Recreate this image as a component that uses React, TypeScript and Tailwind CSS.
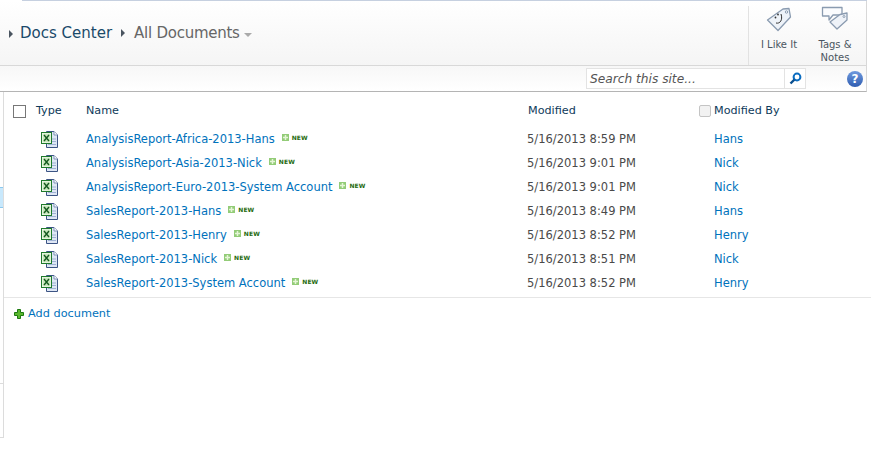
const rows = [
  { name: "AnalysisReport-Africa-2013-Hans", date: "5/16/2013 8:59 PM", by: "Hans" },
  { name: "AnalysisReport-Asia-2013-Nick", date: "5/16/2013 9:01 PM", by: "Nick" },
  { name: "AnalysisReport-Euro-2013-System Account", date: "5/16/2013 9:01 PM", by: "Nick" },
  { name: "SalesReport-2013-Hans", date: "5/16/2013 8:49 PM", by: "Hans" },
  { name: "SalesReport-2013-Henry", date: "5/16/2013 8:52 PM", by: "Henry" },
  { name: "SalesReport-2013-Nick", date: "5/16/2013 8:51 PM", by: "Nick" },
  { name: "SalesReport-2013-System Account", date: "5/16/2013 8:52 PM", by: "Henry" },
];

function ExcelIcon() {
  return (
    <svg width="18" height="17" viewBox="0 0 18 17" className="mt-[1px]">
      <path d="M5.5 .5H13L16.5 4V16.5H5.5Z" fill="#dfe7f5" stroke="#3c5484" />
      <path d="M13 .5V4H16.5" fill="#fff" stroke="#7f93b8" />
      <path d="M10 8H15M10 10.5H15M7 13.5H15" stroke="#9fb2d4" />
      <rect x=".5" y="1.5" width="10" height="11" fill="#fff" stroke="#1f7a2c" />
      <rect x="1.5" y="2.5" width="8" height="9" fill="#c9e8bd" />
      <path d="M3 4L8 10M8 4L3 10" stroke="#14591f" strokeWidth="1.4" />
    </svg>
  );
}

function NewBadge() {
  return (
    <span className="-mt-[4px] ml-[7px] flex items-center gap-[3px]">
      <svg width="7" height="7" viewBox="0 0 7 7">
        <rect width="7" height="7" fill="#93cc78" />
        <path d="M3.5 1V6M1 3.5H6" stroke="#e6f5d8" strokeWidth="1.5" />
      </svg>
      <span className="text-[6px] leading-none font-bold tracking-[0.1px] text-[#246a0e]">NEW</span>
    </span>
  );
}

export default function App() {
  return (
    <div className="flex h-[457px] w-[871px] flex-col overflow-hidden bg-white font-['DejaVu_Sans',Verdana,sans-serif] text-[11px]">
      <div className="mr-[4px] ml-[22px] h-px bg-[#c6d0e0]" />
      <div className="mr-[4px] flex h-[65px] items-stretch border-r border-b border-[#d8d8d8] bg-gradient-to-b from-white to-[#f5f5f5]">
        <div className="flex flex-1 items-center pt-[1px] pl-[9px] text-[15px] text-[#666666]">
          <span className="mr-[7px] h-0 w-0 border-y-[4px] border-l-[4px] border-y-transparent border-l-[#4a5560]" />
          <span className="text-[#1a4a6a]">Docs Center</span>
          <span className="mx-[9px] mb-[2px] h-0 w-0 border-y-[4px] border-l-[4px] border-y-transparent border-l-[#4a5560]" />
          <span className="tracking-[-0.25px]">All Documents</span>
          <span className="mt-[2px] ml-[4px] h-0 w-0 border-x-[4px] border-t-[4px] border-x-transparent border-t-[#aaaaaa]" />
        </div>
        <div className="mt-[5px] flex w-[118px] border-l border-[#e2e2e2] text-center text-[10px] leading-[13px] text-[#4a5560]">
          <div className="flex w-[60px] flex-col items-center">
            <svg width="26" height="26" viewBox="0 0 26 26" className="mt-[1px]">
              <path d="M1.5 13L17 2L23 1.5L24.5 10L12 23.5Z" fill="#eef3f9" stroke="#8a9bb0" strokeWidth="1.3" strokeLinejoin="round" />
              <circle cx="20.5" cy="5" r="1.2" fill="#fff" stroke="#8a9bb0" />
              <circle cx="12" cy="7.5" r=".9" fill="#333" />
              <circle cx="9.5" cy="10.5" r=".9" fill="#333" />
              <path d="M10 16C14 17 17 13 15 7" fill="none" stroke="#333" />
            </svg>
            <span className="mt-[5px]">I Like It</span>
          </div>
          <div className="flex w-[52px] flex-col items-center">
            <svg width="28" height="26" viewBox="0 0 28 26" className="-mt-[1px]">
              <path d="M1.5 2.5H21V10H12L8 15V11H1.5Z" fill="#fbfcfe" stroke="#8a9bb0" strokeWidth="1.3" strokeLinejoin="round" />
              <path d="M9 17L19 9.5L26 8V15L16 24Z" fill="#eef2f8" stroke="#8a9bb0" strokeWidth="1.3" strokeLinejoin="round" />
              <circle cx="23" cy="11.5" r="1" fill="#fff" stroke="#8a9bb0" />
            </svg>
            <span className="mt-[7px]">Tags &amp;<br />Notes</span>
          </div>
        </div>
      </div>
      <div className="mr-[4px] flex h-[26px] shrink-0 items-center border-r border-b border-r-[#d8d8d8] border-b-[#b4b4b4] bg-gradient-to-b from-[#f7f7f7] to-white pl-[586px]">
        <div className="flex h-[21px] w-[220px] items-stretch border border-[#e3e3e3] bg-white">
          <span className="flex-1 pt-[1px] pl-[3px] text-[12.2px] leading-[19px] text-[#555555] italic">Search this site...</span>
          <span className="flex w-[21px] items-center justify-center border-l border-[#e3e3e3]">
            <svg width="13" height="13" viewBox="0 0 13 13">
              <circle cx="8" cy="5" r="3.4" fill="none" stroke="#0a6cc0" strokeWidth="2" />
              <path d="M5.5 7.5L1.5 11.5" stroke="#0a4f90" strokeWidth="2.4" />
            </svg>
          </span>
        </div>
        <span className="ml-[41px] flex h-[16px] w-[16px] items-center justify-center rounded-full bg-gradient-to-b from-[#6f9ade] to-[#2f5cb0] text-[12px] font-bold text-white">?</span>
      </div>
      <div className="flex flex-1">
        <div className="flex h-[346px] w-[4px] flex-col border-r border-b border-[#dcdcdc]">
          <div className="h-[95px]" />
          <div className="h-[21px] border-y border-[#8cc8ee] bg-[#c8e8fc]" />
          <div className="h-[175px]" />
          <div className="h-px bg-[#dcdcdc]" />
        </div>
        <div className="flex-1">
          <div className="flex h-[35px] items-center pt-[3px] text-[11.2px] text-[#0e3a5a]">
            <span className="ml-[9px] h-[13px] w-[13px] border border-[#777777] bg-white" />
            <span className="ml-[10px] w-[50px]">Type</span>
            <span className="w-[442px]">Name</span>
            <span className="w-[171px]">Modified</span>
            <span className="mr-[3px] h-[12px] w-[12px] rounded-[2px] border border-[#c4c4c4] bg-[#f2f2f2]" />
            <span>Modified By</span>
          </div>
          <div className="border-b border-[#e6e6e6] pb-[2px] text-[11.5px]">
            {rows.map((r) => (
              <div key={r.name} className="flex h-[24px] items-center">
                <span className="ml-[37px] w-[45px]"><ExcelIcon /></span>
                <div className="flex w-[441px] items-center pt-[1px] text-[#0072bc]">
                  {r.name}
                  <NewBadge />
                </div>
                <span className="w-[187px] pt-[1px] text-[#4a4a4a]">{r.date}</span>
                <span className="pt-[1px] text-[#0072bc]">{r.by}</span>
              </div>
            ))}
          </div>
          <div className="mt-[8px] flex items-center pl-[10px] text-[11.3px] text-[#0072bc]">
            <svg width="10" height="10" viewBox="0 0 10 10" className="mr-[4px]">
              <path d="M3.5.5H6.5V3.5H9.5V6.5H6.5V9.5H3.5V6.5H.5V3.5H3.5Z" fill="#5cb82e" stroke="#1d7a10" />
            </svg>
            Add document
          </div>
        </div>
      </div>
    </div>
  );
}
